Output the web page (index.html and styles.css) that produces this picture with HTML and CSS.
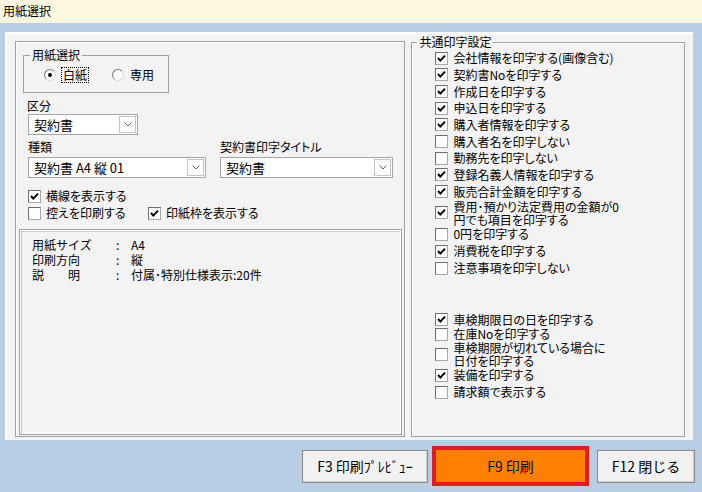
FILE: index.html
```html
<!DOCTYPE html>
<html lang="ja">
<head>
<meta charset="utf-8">
<title>用紙選択</title>
<link rel="stylesheet" href="styles.css">
</head>
<body>
<div class="window">
  <div class="titlebar">用紙選択</div>
  <div class="panel">
    <div class="group left-group">
      <fieldset class="radio-group">
        <legend>用紙選択</legend>
        <div class="radio-row">
          <label class="radio first"><span class="rb on"></span><span class="rtext focus">白紙</span></label>
          <label class="radio second"><span class="rb"></span><span class="rtext">専用</span></label>
        </div>
      </fieldset>
      <div class="field-label kubun">区分</div>
      <div class="combo combo-kubun"><span class="combo-text">契約書</span><span class="combo-btn"><svg width="8" height="5" viewBox="0 0 8 5"><path d="M0.5 0.5 L4 4 L7.5 0.5" fill="none" stroke="#6a6a6a" stroke-width="1"/></svg></span></div>
      <div class="pair-row">
        <div class="pair pair-type">
          <div class="field-label">種類</div>
          <div class="combo"><span class="combo-text">契約書 A4 縦 01</span><span class="combo-btn"><svg width="8" height="5" viewBox="0 0 8 5"><path d="M0.5 0.5 L4 4 L7.5 0.5" fill="none" stroke="#6a6a6a" stroke-width="1"/></svg></span></div>
        </div>
        <div class="pair pair-title">
          <div class="field-label">契約書印字タイトル</div>
          <div class="combo"><span class="combo-text">契約書</span><span class="combo-btn"><svg width="8" height="5" viewBox="0 0 8 5"><path d="M0.5 0.5 L4 4 L7.5 0.5" fill="none" stroke="#6a6a6a" stroke-width="1"/></svg></span></div>
        </div>
      </div>
      <div class="chk-row row1">
        <label class="cb"><span class="box"><svg width="11" height="11" viewBox="0 0 11 11"><path d="M2 5 L4.3 7.6 L9 2.6" fill="none" stroke="#000" stroke-width="2"/></svg></span><span class="cbt">横線を表示する</span></label>
      </div>
      <div class="chk-row row2">
        <label class="cb first-col"><span class="box"></span><span class="cbt">控えを印刷する</span></label>
        <label class="cb"><span class="box"><svg width="11" height="11" viewBox="0 0 11 11"><path d="M2 5 L4.3 7.6 L9 2.6" fill="none" stroke="#000" stroke-width="2"/></svg></span><span class="cbt">印紙枠を表示する</span></label>
      </div>
      <div class="info">
        <div class="info-grid">
          <span>用紙サイズ</span><span>:</span><span>A4</span>
          <span>印刷方向</span><span>:</span><span>縦</span>
          <span>説　　明</span><span>:</span><span>付属･特別仕様表示:20件</span>
        </div>
      </div>
    </div>
    <fieldset class="group right-group">
      <legend>共通印字設定</legend>
      <div class="cb-list upper">
        <label class="cb"><span class="box"><svg width="11" height="11" viewBox="0 0 11 11"><path d="M2 5 L4.3 7.6 L9 2.6" fill="none" stroke="#000" stroke-width="2"/></svg></span><span class="cbt">会社情報を印字する(画像含む)</span></label>
        <label class="cb"><span class="box"><svg width="11" height="11" viewBox="0 0 11 11"><path d="M2 5 L4.3 7.6 L9 2.6" fill="none" stroke="#000" stroke-width="2"/></svg></span><span class="cbt">契約書Noを印字する</span></label>
        <label class="cb"><span class="box"><svg width="11" height="11" viewBox="0 0 11 11"><path d="M2 5 L4.3 7.6 L9 2.6" fill="none" stroke="#000" stroke-width="2"/></svg></span><span class="cbt">作成日を印字する</span></label>
        <label class="cb"><span class="box"><svg width="11" height="11" viewBox="0 0 11 11"><path d="M2 5 L4.3 7.6 L9 2.6" fill="none" stroke="#000" stroke-width="2"/></svg></span><span class="cbt">申込日を印字する</span></label>
        <label class="cb"><span class="box"><svg width="11" height="11" viewBox="0 0 11 11"><path d="M2 5 L4.3 7.6 L9 2.6" fill="none" stroke="#000" stroke-width="2"/></svg></span><span class="cbt">購入者情報を印字する</span></label>
        <label class="cb"><span class="box"></span><span class="cbt">購入者名を印字しない</span></label>
        <label class="cb"><span class="box"></span><span class="cbt">勤務先を印字しない</span></label>
        <label class="cb"><span class="box"><svg width="11" height="11" viewBox="0 0 11 11"><path d="M2 5 L4.3 7.6 L9 2.6" fill="none" stroke="#000" stroke-width="2"/></svg></span><span class="cbt">登録名義人情報を印字する</span></label>
        <label class="cb"><span class="box"><svg width="11" height="11" viewBox="0 0 11 11"><path d="M2 5 L4.3 7.6 L9 2.6" fill="none" stroke="#000" stroke-width="2"/></svg></span><span class="cbt">販売合計金額を印字する</span></label>
        <label class="cb multi"><span class="box"><svg width="11" height="11" viewBox="0 0 11 11"><path d="M2 5 L4.3 7.6 L9 2.6" fill="none" stroke="#000" stroke-width="2"/></svg></span><span class="cbt">費用･預かり法定費用の金額が0<br>円でも項目を印字する</span></label>
        <label class="cb"><span class="box"></span><span class="cbt">0円を印字する</span></label>
        <label class="cb"><span class="box"><svg width="11" height="11" viewBox="0 0 11 11"><path d="M2 5 L4.3 7.6 L9 2.6" fill="none" stroke="#000" stroke-width="2"/></svg></span><span class="cbt">消費税を印字する</span></label>
        <label class="cb"><span class="box"></span><span class="cbt">注意事項を印字しない</span></label>
      </div>
      <div class="cb-list lower">
        <label class="cb"><span class="box"><svg width="11" height="11" viewBox="0 0 11 11"><path d="M2 5 L4.3 7.6 L9 2.6" fill="none" stroke="#000" stroke-width="2"/></svg></span><span class="cbt">車検期限日の日を印字する</span></label>
        <label class="cb"><span class="box"></span><span class="cbt">在庫Noを印字する</span></label>
        <label class="cb multi"><span class="box"></span><span class="cbt">車検期限が切れている場合に<br>日付を印字する</span></label>
        <label class="cb"><span class="box"><svg width="11" height="11" viewBox="0 0 11 11"><path d="M2 5 L4.3 7.6 L9 2.6" fill="none" stroke="#000" stroke-width="2"/></svg></span><span class="cbt">装備を印字する</span></label>
        <label class="cb"><span class="box"></span><span class="cbt">請求額で表示する</span></label>
      </div>
    </fieldset>
  </div>
  <div class="buttons">
    <button class="btn btn-preview">F3 印刷ﾌﾟﾚﾋﾞｭｰ</button>
    <button class="btn btn-print">F9 印刷</button>
    <button class="btn btn-close">F12 閉じる</button>
  </div>
</div>
</body>
</html>
```

FILE: styles.css
```css
* {
  box-sizing: border-box;
}

html, body {
  margin: 0;
  padding: 0;
}

body {
  font-family: "Noto Sans CJK JP", "Noto Sans", sans-serif;
  font-size: 12px;
  color: #000;
  background: #b8cee4;
}

.window {
  width: 702px;
  height: 492px;
  background: #b8cee4;
  overflow: hidden;
  font-feature-settings: "palt";
}

.titlebar {
  height: 23px;
  line-height: 22px;
  padding-left: 3px;
  background: #fcf7de;
  font-size: 12px;
}

.panel {
  margin: 9px 9px 0 5px;
  height: 408px;
  background: #f3f3f3;
  border-left: 2px solid #ffffff;
  border-top: 2px solid #ffffff;
  display: flex;
  align-items: flex-start;
  padding: 1px 8px 0 8px;
}

.group {
  border: 1px solid #a0a0a0;
  box-shadow: inset 1px 1px 0 #ffffff;
}

.left-group {
  margin-top: 6px;
  width: 391px;
  height: 396px;
  display: flex;
  flex-direction: column;
  align-items: flex-start;
}

fieldset {
  margin: 0;
  padding: 0;
  min-width: 0;
}

legend {
  font-size: 12px;
  line-height: 14px;
  padding: 0 2px;
  margin-left: 6px;
}

.radio-group {
  margin: 6px 0 0 7px;
  width: 146px;
  height: 45px;
  border: 1px solid #a0a0a0;
}

.radio-row {
  display: flex;
  align-items: center;
  height: 14px;
  margin-top: 6px;
}

.radio {
  display: flex;
  align-items: center;
}

.radio.first {
  margin-left: 20px;
}

.radio.second {
  margin-left: 24px;
}

.rb {
  width: 12px;
  height: 12px;
  border-radius: 50%;
  background: #ffffff;
  border: 1px solid;
  border-color: #7c7c7c #d8d8d8 #d8d8d8 #7c7c7c;
  display: flex;
  align-items: center;
  justify-content: center;
}

.rb.on::after {
  content: "";
  width: 4px;
  height: 4px;
  border-radius: 50%;
  background: #000;
}

.rtext {
  margin-left: 6px;
  line-height: 14px;
  padding: 0 1px;
}

.radio.second .rtext {
  margin-left: 5px;
}

.focus {
  outline: 1px dotted #000;
}

.field-label {
  line-height: 14px;
  height: 14px;
  white-space: nowrap;
}

.kubun {
  margin: 6px 0 0 11px;
}

.combo {
  height: 21px;
  border: 1px solid #a5a5a5;
  background: #ffffff;
  display: flex;
  align-items: stretch;
  justify-content: space-between;
  padding: 1px;
}

.combo-kubun {
  margin: 1px 0 0 12px;
  width: 110px;
}

.combo-text {
  font-size: 13px;
  line-height: 17px;
  padding-left: 4px;
  white-space: nowrap;
}

.combo-btn {
  width: 17px;
  border: 1px solid #c4c4c4;
  background: #ffffff;
  display: flex;
  align-items: center;
  justify-content: center;
}

.pair-row {
  display: flex;
  margin: 5px 0 0 12px;
  gap: 14px;
}

.pair .combo {
  margin-top: 3px;
}

.pair-type {
  width: 178px;
}

.pair-title {
  width: 173px;
}

.chk-row {
  display: flex;
  align-items: center;
  height: 16px;
  margin-left: 12px;
}

.chk-row.row1 {
  margin-top: 10px;
}

.chk-row.row2 {
  margin-top: 1px;
}

.chk-row .first-col {
  width: 120px;
}

.cb {
  display: flex;
  align-items: center;
  white-space: nowrap;
}

.cbt {
  line-height: 14px;
}

.box {
  width: 13px;
  height: 13px;
  flex: none;
  background: #ffffff;
  border: 1px solid;
  border-color: #6e6e6e #a8a8a8 #a8a8a8 #6e6e6e;
  margin-right: 5px;
  display: flex;
}

.box svg {
  display: block;
}

.info {
  margin: 8px 0 0 3px;
  width: 383px;
  height: 206px;
  border: 1px solid #a0a0a0;
  box-shadow: inset 1px 1px 0 #ffffff, inset -1px -1px 0 #ffffff, inset 2px 2px 0 #c8c8c8;
}

.info-grid {
  display: grid;
  grid-template-columns: 84px 15px auto;
  padding: 7px 0 0 12px;
  line-height: 15px;
  font-feature-settings: normal;
}

.right-group {
  margin-left: 6px;
  width: 274px;
  height: 402px;
}

.right-group legend {
  margin-left: 5px;
}

.cb-list {
  display: grid;
  padding-left: 23px;
}

.cb-list.upper {
  padding-top: 1px;
  grid-template-rows: repeat(9, 16.67px) 26px repeat(3, 17px);
}

.cb-list.lower {
  margin-top: 35.5px;
  grid-template-rows: 15px 14px 26px 16px 18px;
}

.cb.multi .cbt {
  line-height: 13px;
}

.buttons {
  height: 52px;
  display: flex;
  align-items: center;
  justify-content: flex-end;
  padding-right: 7px;
}

.btn {
  font-family: "Noto Sans CJK JP", "Noto Sans", sans-serif;
  font-size: 14px;
  color: #000;
  padding: 0;
  height: 33px;
  background: #f1f1f1;
  border: 1px solid #8a8a8a;
  box-shadow: inset -1px -1px 0 #d0d0d0;
  white-space: nowrap;
}

.btn-preview {
  width: 126px;
  margin-right: 4px;
}

.btn-print {
  width: 157px;
  height: 40px;
  margin-right: 8px;
  background: #ff8000;
  border: 4px solid #e21c1c;
  box-shadow: none;
}

.btn-close {
  width: 98px;
}
```
